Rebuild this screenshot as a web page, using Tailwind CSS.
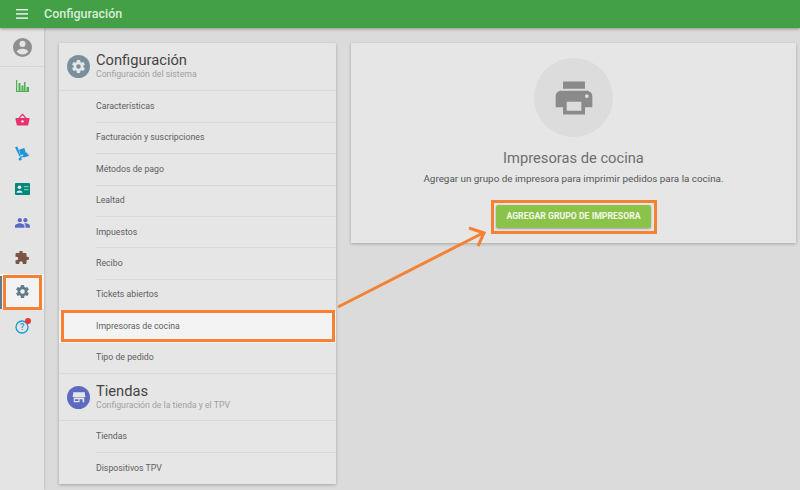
<!DOCTYPE html>
<html lang="es">
<head>
<meta charset="UTF-8">
<title>Configuración</title>
<script src="https://cdn.jsdelivr.net/npm/@tailwindcss/browser@4"></script>
</head>
<body class="relative w-[800px] h-[490px] overflow-hidden bg-[#dbdbdb] font-['Roboto',sans-serif]">
  <header class="relative z-10 h-[28px] bg-[#43a047] flex items-center shadow-[0_1px_3px_rgba(0,0,0,0.35)] text-white">
    <svg class="ml-[16px] w-[12px] h-[10px]" viewBox="0 0 12 10" fill="#f1f8f1"><rect y="0" width="12" height="1.4"/><rect y="4.2" width="12" height="1.4"/><rect y="8.4" width="12" height="1.4"/></svg>
    <span class="ml-[16px] text-[12.5px] font-medium text-[#d9ecd9]">Configuración</span>
  </header>

  <div class="flex h-[462px]">
    <!-- sidebar -->
    <nav class="w-[44px] shrink-0 bg-[#e4e4e4] shadow-[1px_0_2px_rgba(0,0,0,0.12)] flex flex-col items-center">
      <div class="w-full h-[39px] border-b border-[#d6d6d6] flex items-center justify-center">
        <svg class="w-[19px] h-[19px]" viewBox="2 2 20 20" fill="#8f8f8f"><path d="M12 2a10 10 0 1 0 0 20 10 10 0 0 0 0-20zm0 3a3.2 3.2 0 1 1 0 6.4A3.2 3.2 0 0 1 12 5zm0 14.4a7.6 7.6 0 0 1-6-3c.03-2 4-3.1 6-3.1s5.97 1.1 6 3.1a7.6 7.6 0 0 1-6 3z"/></svg>
      </div>
      <div class="h-[36px] mt-[1px] flex items-center justify-center">
        <svg class="w-[13px] h-[12px]" viewBox="0 0 13 12" fill="#4caf50"><rect x="0" y="0" width="1.2" height="12"/><rect x="0" y="11" width="13" height="1"/><rect x="2.500" y="3" width="2" height="8"/><rect x="5.500" y="5.500" width="2" height="5.500"/><rect x="8" y="2" width="1.500" height="9"/><rect x="10.500" y="7" width="2.500" height="4"/></svg>
      </div>
      <div class="h-[32px] -mt-[1px] mb-[1px] flex items-center justify-center">
        <svg class="w-[15px] h-[13px]" viewBox="0 0 15 14"><path fill="#e6326e" d="M0 5.500h15v1.600l-1.500 6.400H1.500L0 7.100zM3.200 5.500 7 .8h1l3.800 4.700h-1.700L7.500 2.300 4.900 5.500z"/><circle cx="7.500" cy="9" r="1.300" fill="#f3f3f3"/></svg>
      </div>
      <div class="h-[35px] flex items-center justify-center">
        <svg class="w-[15px] h-[15px]" viewBox="0 0 16 16" fill="#1e96d9"><path d="M0 1.200 2.500 0.500 6 10.500l-1.200.6z"/><rect x="5" y="3" width="6" height="6" transform="rotate(-18 8 6)"/><rect x="8.500" y="7.500" width="5" height="4" transform="rotate(-18 11 9)"/><path d="M5 11.500l10-2.500.3 1.200-10 2.700z"/><circle cx="5.500" cy="14" r="1.500"/></svg>
      </div>
      <div class="h-[35px] flex items-center justify-center">
        <svg class="w-[15px] h-[12px]" viewBox="0 0 15 12"><rect width="15" height="12" rx="1" fill="#00897b"/><circle cx="4.500" cy="4.300" r="1.800" fill="#eef"/><path fill="#eef" d="M1.500 9.800c0-1.600 2-2.300 3-2.300s3 .7 3 2.300z"/><rect x="9" y="3" width="4.500" height="1.200" fill="#7cc4bc"/><rect x="9" y="6" width="4.500" height="1.200" fill="#7cc4bc"/></svg>
      </div>
      <div class="h-[34px] flex items-center justify-center">
        <svg class="w-[15px] h-[10px]" viewBox="0 0 15 10" fill="#5c6bc0"><circle cx="4.800" cy="2.200" r="2.100"/><circle cx="10.400" cy="2.200" r="2.100"/><path d="M0 9.700V8c0-1.700 3.200-2.700 4.800-2.700S9.500 6.300 9.500 8v1.700z"/><path d="M10.500 9.700V8c0-1-.5-1.900-1.300-2.500.4-.1.900-.2 1.200-.2 1.600 0 4.600 1 4.600 2.700v1.700z"/></svg>
      </div>
      <div class="h-[34px] flex items-center justify-center">
        <svg class="w-[14px] h-[13px]" viewBox="2 2 20 20" fill="#795548"><path d="M20.500 11H19V7a2 2 0 0 0-2-2h-4V3.500a2.500 2.500 0 0 0-5 0V5H4a2 2 0 0 0-2 2v3.800h1.500a2.700 2.700 0 0 1 0 5.400H2V20a2 2 0 0 0 2 2h3.800v-1.500a2.700 2.700 0 0 1 5.400 0V22H17a2 2 0 0 0 2-2v-4h1.500a2.500 2.500 0 0 0 0-5z"/></svg>
      </div>
      <div class="h-[35px] w-full flex items-center justify-center bg-[#f3f3f3]">
        <svg class="w-[13px] h-[13px]" viewBox="2 2 20 20" fill="#607d8b"><path d="M19.430 12.980a7.800 7.800 0 0 0 0-1.960l2.110-1.650a.5.500 0 0 0 .12-.64l-2-3.460a.5.500 0 0 0-.61-.22l-2.490 1a7.300 7.300 0 0 0-1.690-.98l-.38-2.650A.49.490 0 0 0 14 2h-4a.49.490 0 0 0-.49.420l-.38 2.650c-.61.25-1.170.59-1.690.98l-2.490-1a.49.490 0 0 0-.61.22l-2 3.460a.49.490 0 0 0 .12.640l2.110 1.650a7.900 7.900 0 0 0 0 1.960l-2.110 1.650a.5.500 0 0 0-.12.640l2 3.460c.12.220.39.300.61.220l2.490-1c.52.400 1.080.73 1.690.98l.38 2.650c.03.240.24.420.49.420h4c.25 0 .46-.18.49-.42l.38-2.650c.61-.25 1.170-.59 1.690-.98l2.490 1c.23.090.49 0 .61-.22l2-3.460a.5.500 0 0 0-.12-.64zM12 15.500a3.500 3.500 0 1 1 0-7 3.500 3.500 0 0 1 0 7z"/></svg>
      </div>
      <div class="relative h-[35px] flex items-center justify-center">
        <svg class="w-[14px] h-[14px]" viewBox="0 0 14 14" fill="none"><circle cx="7" cy="7" r="6" stroke="#1e96d9" stroke-width="1.300"/><text x="7" y="10.300" text-anchor="middle" font-size="9.500" font-weight="500" fill="#1e96d9" font-family="Roboto">?</text></svg>
        <span class="absolute top-[9px] right-[-2px] w-[6px] h-[6px] rounded-full bg-[#e53935]"></span>
      </div>
    </nav>

    <!-- settings list -->
    <section class="w-[277px] h-[441px] mt-[15px] ml-[15px] bg-[#e6e6e6] shadow-[0_1px_3px_rgba(0,0,0,0.25)] text-[#5f5f5f]">
      <div class="h-[48px] border-b border-[#d9d9d9] flex items-center pl-[8px]">
        <span class="w-[23px] h-[23px] rounded-full bg-[#78909c] flex items-center justify-center">
          <svg class="w-[13px] h-[13px]" viewBox="2 2 20 20" fill="#e6e6e6"><path d="M19.430 12.980a7.800 7.800 0 0 0 0-1.960l2.110-1.650a.5.500 0 0 0 .12-.64l-2-3.460a.5.500 0 0 0-.61-.22l-2.490 1a7.300 7.300 0 0 0-1.690-.98l-.38-2.650A.49.49 0 0 0 14 2h-4a.49.49 0 0 0-.49.420l-.38 2.650c-.61.25-1.170.59-1.690.98l-2.490-1a.49.49 0 0 0-.61.22l-2 3.460a.49.49 0 0 0 .12.640l2.110 1.650a7.900 7.900 0 0 0 0 1.960l-2.110 1.650a.5.500 0 0 0-.12.640l2 3.460c.12.220.39.300.61.220l2.490-1c.52.400 1.080.73 1.690.98l.38 2.650c.03.240.24.420.49.420h4c.25 0 .46-.18.49-.42l.38-2.650c.61-.25 1.170-.59 1.690-.98l2.490 1c.23.090.49 0 .61-.22l2-3.460a.5.500 0 0 0-.12-.64zM12 15.500a3.500 3.500 0 1 1 0-7 3.500 3.500 0 0 1 0 7z"/></svg>
        </span>
        <div class="ml-[6px] -mt-[2px]">
          <div class="text-[14.7px] leading-[17px] text-[#444]">Configuración</div>
          <div class="text-[8.7px] leading-[10px] text-[#a0a0a0]">Configuración del sistema</div>
        </div>
      </div>
      <div class="pl-[37px] pt-[0.4px] text-[8.75px]">
        <div class="h-[31.4px] flex items-center border-b border-[#d9d9d9]">Características</div>
        <div class="h-[31.4px] flex items-center border-b border-[#d9d9d9]">Facturación y suscripciones</div>
        <div class="h-[31.4px] flex items-center border-b border-[#d9d9d9]">Métodos de pago</div>
        <div class="h-[31.4px] flex items-center border-b border-[#d9d9d9]">Lealtad</div>
        <div class="h-[31.4px] flex items-center border-b border-[#d9d9d9]">Impuestos</div>
        <div class="h-[31.4px] flex items-center border-b border-[#d9d9d9]">Recibo</div>
        <div class="h-[31.4px] flex items-center border-b border-[#d9d9d9]">Tickets abiertos</div>
        <div class="h-[31.4px] -ml-[37px] pl-[37px] flex items-center bg-[#f3f3f3]">Impresoras de cocina</div>
        <div class="h-[30.6px] flex items-center">Tipo de pedido</div>
      </div>
      <div class="h-[48px] border-y border-[#d9d9d9] flex items-center pl-[8px]">
        <span class="w-[23px] h-[23px] rounded-full bg-[#5c6bc0] flex items-center justify-center">
          <svg class="w-[14px] h-[14px]" viewBox="0 0 24 24" fill="#e6e6e6"><path d="M2 4h20v3l1 5H1l1-5zM3 13h18v8h-3v-5h-5v5H3zm2 3v3h6v-3z"/></svg>
        </span>
        <div class="ml-[6px] -mt-[2px]">
          <div class="text-[14.7px] leading-[17px] text-[#444]">Tiendas</div>
          <div class="text-[8.7px] leading-[10px] text-[#a0a0a0]">Configuración de la tienda y el TPV</div>
        </div>
      </div>
      <div class="pl-[37px] pt-[0.5px] text-[8.75px]">
        <div class="h-[31.4px] flex items-center border-b border-[#d9d9d9]">Tiendas</div>
        <div class="h-[31.4px] flex items-center">Dispositivos TPV</div>
      </div>
    </section>

    <!-- empty state -->
    <section class="w-[445px] h-[200px] mt-[15px] ml-[15px] bg-[#e6e6e6] shadow-[0_1px_3px_rgba(0,0,0,0.25)] flex flex-col items-center">
      <div class="mt-[15px] w-[79px] h-[79px] rounded-full bg-[#dcdcdc] flex items-center justify-center">
        <svg class="w-[44px] h-[44px]" viewBox="0 0 24 24" fill="#8a8a8a"><path d="M19 8H5c-1.660 0-3 1.340-3 3v6h4v4h12v-4h4v-6c0-1.660-1.340-3-3-3zm-3 11H8v-5h8v5zm3-7c-.550 0-1-.450-1-1s.450-1 1-1 1 .450 1 1-.450 1-1 1zM18 3H6v4h12V3z"/></svg>
      </div>
      <h2 class="mt-[11px] text-[14.7px] leading-[20px] text-[#6e6e6e]">Impresoras de cocina</h2>
      <p class="mt-[4px] text-[9.85px] leading-[14px] text-[#555]">Agregar un grupo de impresora para imprimir pedidos para la cocina.</p>
      <button class="mt-[19px] w-[155px] h-[23px] shrink-0 bg-[#8bc34a] rounded-[2px] shadow-[0_1px_2px_rgba(0,0,0,0.3)] text-[8.7px] leading-[23px] font-bold text-[#f2f8ea]">AGREGAR GRUPO DE IMPRESORA</button>
    </section>
  </div>

  <!-- annotations -->
  <div class="absolute left-0 top-[276px] w-[2px] h-[33px] bg-[#607d8b]"></div>
  <div class="absolute left-[3px] top-[275px] w-[39px] h-[35px] border-[3px] border-[#f58233]"></div>
  <div class="absolute left-[61px] top-[310px] w-[274px] h-[32px] border-[3px] border-[#f58233]"></div>
  <div class="absolute left-[491px] top-[200px] w-[166px] h-[34px] border-[3px] border-[#f58233]"></div>
  <svg class="absolute left-0 top-0" width="800" height="490" fill="none" stroke="#f58233" stroke-width="3"><path d="M338 307 483 233M469 228 484 233 478 246"/></svg>
</body>
</html>
